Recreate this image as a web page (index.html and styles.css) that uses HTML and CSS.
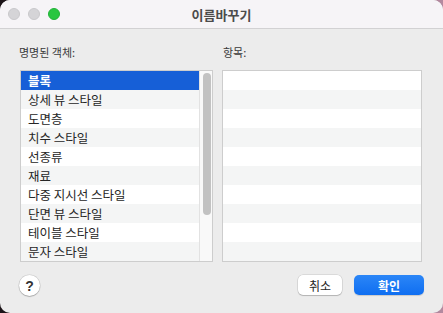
FILE: index.html
```html
<!DOCTYPE HTML>
<html>
<head>
  <title>이름바꾸기</title>
  <meta name="viewport" content="width=device-width, initial-scale=1">
  <link rel="stylesheet" href="styles.css">
</head>
<body>
  <div class="window">
    <div class="titlebar">
      <div class="lights">
        <span class="light"></span>
        <span class="light"></span>
        <span class="light green"></span>
      </div>
      <div class="title">이름바꾸기</div>
    </div>

    <div class="content">
      <div class="columns">
        <div class="column">
          <div class="label">명명된 객체:</div>
          <div class="list">
            <div class="rows">
              <div class="row selected">블록</div>
              <div class="row">상세 뷰 스타일</div>
              <div class="row">도면층</div>
              <div class="row">치수 스타일</div>
              <div class="row">선종류</div>
              <div class="row">재료</div>
              <div class="row">다중 지시선 스타일</div>
              <div class="row">단면 뷰 스타일</div>
              <div class="row">테이블 스타일</div>
              <div class="row">문자 스타일</div>
            </div>
            <div class="scrollbar"><div class="thumb"></div></div>
          </div>
        </div>
        <div class="column">
          <div class="label right-label">항목:</div>
          <div class="list">
            <div class="rows">
              <div class="row"></div>
              <div class="row"></div>
              <div class="row"></div>
              <div class="row"></div>
              <div class="row"></div>
              <div class="row"></div>
              <div class="row"></div>
              <div class="row"></div>
              <div class="row"></div>
              <div class="row"></div>
            </div>
          </div>
        </div>
      </div>

      <div class="footer">
        <button class="help-btn">?</button>
        <div class="actions">
          <button class="btn">취소</button>
          <button class="btn primary">확인</button>
        </div>
      </div>
    </div>
  </div>
</body>
</html>
```

FILE: styles.css
```css
/* Dialog window */
html, body {
  margin: 0;
  padding: 0;
  height: 100%;
}

body {
  font-family: "Noto Sans CJK KR", "Noto Sans", sans-serif;
  background: linear-gradient(90deg, #1c1418 0%, #3b2432 60%, #b48aa0 100%);
  overflow: hidden;
}

.window {
  width: 443px;
  height: 313px;
  background-color: #ececec;
  border-radius: 10px;
  overflow: hidden;
  display: flex;
  flex-direction: column;
}

.titlebar {
  height: 28px;
  background-color: #f6f4f7;
  border-bottom: 1px solid #d2d1d3;
  display: flex;
  align-items: center;
  position: relative;
}

.lights {
  display: flex;
  gap: 8px;
  padding-left: 8px;
}

.light {
  width: 12px;
  height: 12px;
  border-radius: 50%;
  background-color: #d5d4d7;
  box-sizing: border-box;
  border: 1px solid #c9c8cb;
}

.light.green {
  background-color: #29c641;
  border-color: #22b238;
}

.title {
  position: absolute;
  left: 0;
  right: 0;
  text-align: center;
  font-size: 13px;
  font-weight: bold;
  color: #4b4b4b;
}

.content {
  flex: 1;
  padding: 16px 21px 0 20px;
}

.columns {
  display: grid;
  grid-template-columns: 193px 200px;
  gap: 9px;
}

.label {
  height: 15px;
  line-height: 15px;
  font-size: 11px;
  color: #3a3a3a;
  margin-bottom: 10px;
  margin-left: -1px;
}

.right-label {
  margin-left: 1px;
}

.list {
  height: 190px;
  border: 1px solid #cdcdcd;
  background-color: #fff;
  display: flex;
}

.rows {
  flex: 1;
}

.row {
  height: 19px;
  line-height: 19px;
  font-size: 12.5px;
  color: #262626;
  padding-left: 7px;
  background-color: #fff;
}

.row:nth-child(even) {
  background-color: #f4f5f5;
}

.row.selected {
  background-color: #165fd7;
  color: #fff;
  font-weight: bold;
}

.scrollbar {
  width: 13px;
  background-color: #f9f9f9;
  border-left: 1px solid #e2e2e2;
  padding: 2px 0 0 3px;
  box-sizing: border-box;
}

.thumb {
  width: 8px;
  height: 142px;
  border-radius: 4px;
  background-color: #c2c2c2;
}

.footer {
  margin-top: 12px;
  display: flex;
  align-items: center;
  justify-content: space-between;
  margin-left: -1px;
  margin-right: -2px;
}

.help-btn {
  width: 21px;
  height: 21px;
  border-radius: 50%;
  border: none;
  background-color: #fff;
  box-shadow: 0 0 0 0.5px rgba(0, 0, 0, 0.15), 0 1px 1px rgba(0, 0, 0, 0.2);
  font-family: "Liberation Sans", Arial, sans-serif;
  font-size: 14px;
  font-weight: bold;
  color: #333;
  padding: 0;
  margin-top: 1px;
}

.actions {
  display: flex;
  gap: 12px;
}

.btn {
  height: 20px;
  width: 44px;
  padding: 0;
  border: none;
  border-radius: 5px;
  background-color: #fff;
  box-shadow: 0 0 0 0.5px rgba(0, 0, 0, 0.15), 0 1px 1px rgba(0, 0, 0, 0.18);
  font-family: "Noto Sans CJK KR", sans-serif;
  font-size: 12px;
  color: #262626;
}

.btn.primary {
  width: 70px;
  background: linear-gradient(#2b86f7, #0f6ef1);
  color: #fff;
  font-weight: bold;
  box-shadow: 0 1px 1px rgba(0, 0, 0, 0.15);
}
```
